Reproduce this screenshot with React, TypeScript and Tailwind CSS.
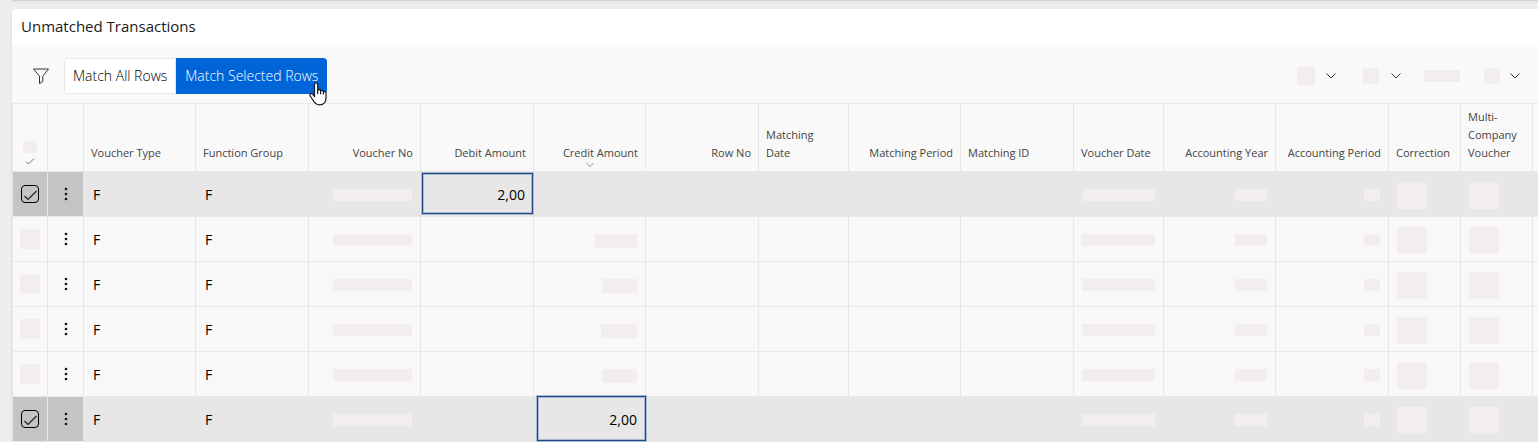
import React, { useState } from 'react';

interface Row {
    id: number;
    selected: boolean;
    debit?: string;
    credit?: string;
    creditBar?: string;
}

interface Column {
    label: string;
    width: string;
    align: string;
    sorted?: boolean;
}

const columns: Column[] = [
    { label: 'Voucher Type', width: 'w-[112px]', align: 'text-left' },
    { label: 'Function Group', width: 'w-[113px]', align: 'text-left' },
    { label: 'Voucher No', width: 'w-[112px]', align: 'text-right' },
    { label: 'Debit Amount', width: 'w-[113px]', align: 'text-right' },
    { label: 'Credit Amount', width: 'w-[112px]', align: 'text-right', sorted: true },
    { label: 'Row No', width: 'w-[113px]', align: 'text-right' },
    { label: 'Matching\nDate', width: 'w-[90px]', align: 'text-left' },
    { label: 'Matching Period', width: 'w-[112px]', align: 'text-right' },
    { label: 'Matching ID', width: 'w-[113px]', align: 'text-left' },
    { label: 'Voucher Date', width: 'w-[90px]', align: 'text-left' },
    { label: 'Accounting Year', width: 'w-[112px]', align: 'text-right' },
    { label: 'Accounting Period', width: 'w-[113px]', align: 'text-right' },
    { label: 'Correction', width: 'w-[72px]', align: 'text-left' },
    { label: 'Multi-\nCompany\nVoucher', width: 'w-[72px]', align: 'text-left' },
];

const initialRows: Row[] = [
    { id: 1, selected: true, debit: '2,00' },
    { id: 2, selected: false, creditBar: 'w-[42px]' },
    { id: 3, selected: false, creditBar: 'w-[35px]' },
    { id: 4, selected: false, creditBar: 'w-[36px]' },
    { id: 5, selected: false, creditBar: 'w-[35px]' },
    { id: 6, selected: true, credit: '2,00' },
];

const ChevronIcon = ({ className }: { className: string }) => (
    <svg viewBox="0 0 10 6" className={className} fill="none" stroke="currentColor" aria-hidden="true">
        <path d="M.5.5 5 5 9.500.5" />
    </svg>
);

const Placeholder = ({ className }: { className: string }) => (
    <span className={`block bg-[#f3eded] ${className}`} />
);

const Toolbar = () => (
    <div className="relative z-10 flex h-[58px] items-center bg-[#f9f9f9] pt-1 pl-5">
        <button type="button" aria-label="Filter" className="mr-3 flex h-9 w-5 items-center text-[#333]">
            <svg viewBox="0 0 18 18" className="h-[18px] w-[18px]" fill="none" stroke="currentColor" strokeLinejoin="round" aria-hidden="true">
                <path d="M1.500 2h15l-5.700 7.200v5.400l-3.300 1.900V9.200Z" />
            </svg>
        </button>
        <button type="button" className="h-9 rounded-l border border-[#e7e7e7] bg-white px-2 text-sm font-light text-black">
            Match All Rows
        </button>
        <div className="relative">
            <button type="button" className="h-9 rounded-r bg-[#0064d9] px-[9px] text-sm font-light text-white">
                Match Selected Rows
            </button>
            <svg viewBox="0 0 18 24" className="absolute right-0 -bottom-3 h-6 w-[18px]" aria-hidden="true">
                <path
                    d="M5.500 14.500V2.800c0-2.400 3.200-2.400 3.200 0v5.400c.6-1 2.800-.9 2.900.6.900-.9 2.700-.5 2.800.9 1-.6 2.600-.1 2.600 1.600v4.500c0 4-2.300 7-6.500 7-3.200 0-4.700-1.500-6.200-4.300L1.200 14c-1-2 1-3.200 2.400-1.800Z"
                    fill="#fff"
                    stroke="#111827"
                    strokeWidth="1.200"
                    strokeLinejoin="round"
                />
                <path d="M8.700 8v4M11.600 8.800v3.400M14.400 9.800v2.600" stroke="#111827" strokeWidth="1.200" />
            </svg>
        </div>
        <div className="mr-[18px] ml-auto flex items-center text-[#333]">
            <Placeholder className="h-[18px] w-[18px]" />
            <ChevronIcon className="ml-[11px] h-1.5 w-2.5" />
            <Placeholder className="ml-[27px] h-4 w-4" />
            <ChevronIcon className="ml-3 h-1.5 w-2.5" />
            <Placeholder className="ml-[23px] h-3 w-9" />
            <Placeholder className="ml-6 h-4 w-4" />
            <ChevronIcon className="ml-[10px] h-1.5 w-2.5" />
        </div>
    </div>
);

interface TransactionRowProps {
    row: Row;
    onToggle: (id: number) => void;
}

const TransactionRow: React.FC<TransactionRowProps> = ({ row, onToggle }) => {
    const cell = `relative h-[45px] border-t border-r border-[#e7e7e7] px-2 pt-0.5 ${row.selected ? 'bg-[#e7e7e7]' : 'bg-[#f8f8f8]'}`;
    const actionCell = `h-[45px] border-t border-r border-[#e7e7e7] ${row.selected ? 'bg-[#c4c4c4]' : 'bg-[#f8f8f8]'}`;
    const marker = 'absolute z-10 border border-[#1f4788] shadow-[0_0_0_1px_#a9b8d2,inset_0_0_0_1px_#a9b8d2]';

    return (
        <tr>
            <td className={`${actionCell} border-l`}>
                {row.selected ? (
                    <label className="relative mx-auto block h-[18px] w-[18px]">
                        <input
                            type="checkbox"
                            checked={row.selected}
                            onChange={() => onToggle(row.id)}
                            aria-label={`Select row ${row.id}`}
                            className="block h-[18px] w-[18px] appearance-none rounded border border-black"
                        />
                        <svg viewBox="0 0 18 18" className="pointer-events-none absolute inset-0" fill="none" stroke="#222" strokeWidth="1.2" aria-hidden="true">
                            <path d="M3.500 11 7 14.500 15.500 6" />
                        </svg>
                    </label>
                ) : (
                    <Placeholder className="mx-auto h-5 w-5" />
                )}
            </td>
            <td className={actionCell}>
                <button type="button" aria-label="Row actions" className="mx-auto block">
                    <svg viewBox="0 0 4 14" className="h-3.5 w-1" fill="#111" aria-hidden="true">
                        <circle cx="2" cy="2" r="1.300" />
                        <circle cx="2" cy="7" r="1.300" />
                        <circle cx="2" cy="12" r="1.300" />
                    </svg>
                </button>
            </td>
            <td className={`${cell} pl-[9px]`}>F</td>
            <td className={`${cell} pl-[9px]`}>F</td>
            <td className={cell}>
                <Placeholder className="ml-auto h-3 w-[79px]" />
            </td>
            <td className={`${cell} text-right`}>
                {row.debit}
                {row.debit && <span className={`${marker} top-px right-0 bottom-0.5 left-px`} />}
            </td>
            <td className={`${cell} text-right`}>
                {row.credit}
                {row.credit && <span className={`${marker} -top-px -right-px bottom-0 left-[3px]`} />}
                {row.creditBar && <Placeholder className={`mt-0.5 ml-auto h-3.5 ${row.creditBar}`} />}
            </td>
            <td className={cell} />
            <td className={cell} />
            <td className={cell} />
            <td className={cell} />
            <td className={cell}>
                <Placeholder className="h-3 w-[73px]" />
            </td>
            <td className={cell}>
                <Placeholder className="ml-auto h-3 w-8" />
            </td>
            <td className={cell}>
                <Placeholder className="ml-auto h-3 w-4" />
            </td>
            <td className={`${cell} pt-0`}>
                <Placeholder className="h-[27px] w-[30px] rounded-xs" />
            </td>
            <td className={`${cell} pt-0`}>
                <Placeholder className="h-[27px] w-[30px] rounded-xs" />
            </td>
            <td className={`${cell} border-r-0`} />
        </tr>
    );
};

export default function App() {
    const [rows, setRows] = useState<Row[]>(initialRows);

    const handleToggle = (id: number) => {
        setRows(rows.map((row) => (row.id === id ? { ...row, selected: !row.selected } : row)));
    };

    return (
        <div className="overflow-hidden bg-[#efedf0] pl-3 font-['Open_Sans',sans-serif]">
            <div className="mb-2 h-px bg-[#d2d0d3] shadow" />
            <section className="rounded-tl bg-white shadow">
                <h2 className="flex h-9 items-center pb-0.5 pl-[9px] text-[15px] font-medium text-[#1a1a1a]">Unmatched Transactions</h2>
                <Toolbar />
                <table className="w-full table-fixed border-separate border-spacing-0 border-b border-[#e7e7e7] text-sm text-black">
                    <thead>
                        <tr className="text-[11px] text-[#444]">
                            <th className="h-[68px] w-9 border-t border-r border-l border-[#e7e7e7] bg-[#f9f9f9] pb-1.5 align-bottom">
                                <Placeholder className="mx-auto mb-1 h-3 w-3.5" />
                                <svg viewBox="0 0 10 8" className="mx-auto h-2 w-2.5" fill="none" stroke="#777" aria-hidden="true">
                                    <path d="M1 4.500 3.500 7 9 1.500" />
                                </svg>
                            </th>
                            <th className="w-9 border-t border-r border-[#e7e7e7] bg-[#f9f9f9]" />
                            {columns.map((column) => (
                                <th
                                    key={column.label}
                                    className={`relative border-t border-r border-[#e7e7e7] bg-[#f9f9f9] px-[7px] pb-[9px] align-bottom leading-[18px] font-normal whitespace-pre-line ${column.width} ${column.align}`}
                                >
                                    {column.label}
                                    {column.sorted && <ChevronIcon className="absolute bottom-[3px] left-1/2 -ml-1 h-1.5 w-2 text-[#777]" />}
                                </th>
                            ))}
                            <th className="border-t border-[#e7e7e7] bg-[#f9f9f9]" />
                        </tr>
                    </thead>
                    <tbody>
                        {rows.map((row) => (
                            <TransactionRow key={row.id} row={row} onToggle={handleToggle} />
                        ))}
                    </tbody>
                </table>
            </section>
        </div>
    );
}
